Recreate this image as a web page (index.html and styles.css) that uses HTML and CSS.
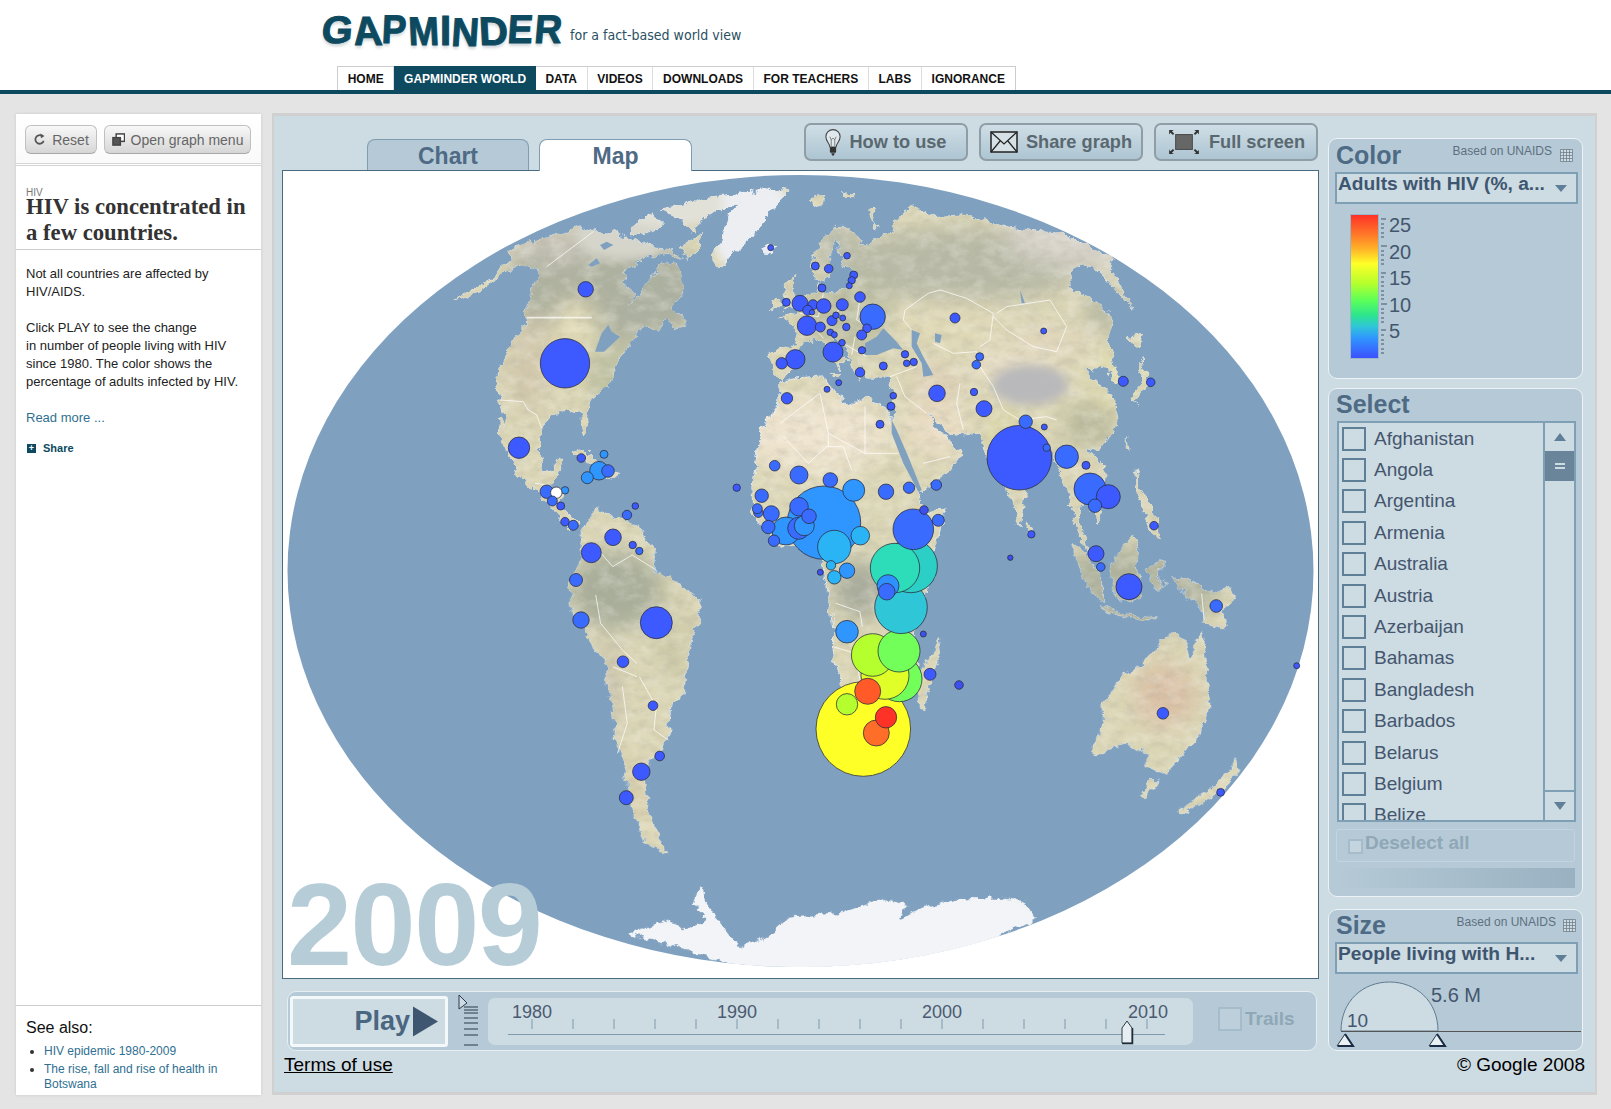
FILE: index.html
```html
<!DOCTYPE html>
<html lang="en">
<head>
<meta charset="utf-8">
<title>Gapminder World</title>
<link rel="stylesheet" href="styles.css">
</head>
<body>
<header class="site-head">
  <div class="brand">
    <div class="logo"><span class="l1">G</span><span class="l2">A</span><span class="l3">P</span><span class="l4">M</span><span class="l5">I</span><span class="l6">N</span><span class="l7">D</span><span class="l8">E</span><span class="l9">R</span></div>
    <div class="tagline">for a fact-based world view</div>
  </div>
  <nav class="nav">
    <a>HOME</a><a class="on">GAPMINDER WORLD</a><a>DATA</a><a>VIDEOS</a><a>DOWNLOADS</a><a>FOR TEACHERS</a><a>LABS</a><a>IGNORANCE</a>
  </nav>
</header>

<div class="page">
  <aside class="side">
    <div class="side-top">
      <button class="gbtn gb-reset"><svg class="gi" viewBox="0 0 14 14"><path d="M11.5 8.5A4.6 4.6 0 1 1 9.8 3.2" fill="none" stroke="#555" stroke-width="1.9"/><path d="M8 0.5l4.4 2.6-3.8 2.6z" fill="#555"/></svg>Reset</button>
      <button class="gbtn gb-open"><svg class="gi" viewBox="0 0 14 14"><rect x="4.5" y="1" width="9" height="8" fill="#fff" stroke="#444" stroke-width="1.6"/><rect x="1" y="5" width="8" height="8" fill="#555" stroke="#444" stroke-width="1.6"/></svg>Open graph menu</button>
    </div>
    <div class="side-head">
      <div class="kicker">HIV</div>
      <h1>HIV is concentrated in a few countries.</h1>
    </div>
    <div class="side-body">
      <p>Not all countries are affected by HIV/AIDS.</p>
      <p>Click PLAY to see the change<br>in number of people living with HIV since 1980. The color shows the percentage of adults infected by HIV.</p>
      <a class="more">Read more ...</a>
      <div class="share"><span class="plus">+</span>Share</div>
    </div>
    <div class="see">
      <h2>See also:</h2>
      <ul>
        <li>HIV epidemic 1980-2009</li>
        <li>The rise, fall and rise of health in Botswana</li>
      </ul>
    </div>
  </aside>

  <main class="app">
    <section class="centre">
      <div class="toolbar">
        <div class="tabs">
          <div class="tab">Chart</div>
          <div class="tab active">Map</div>
        </div>
        <div class="tools">
          <button class="tool"><svg class="ti-bulb" viewBox="0 0 18 32"><path d="M5.5 21c0-4-4.5-6-4.5-11.500a8 8 0 0 1 16 0c0 5.500-4.500 7.500-4.500 11.500z" fill="#dfe8ec" stroke="#444" stroke-width="1.2"/><path d="M7 20V13L5.500 9.500M11 20V13l1.500-3.500M7 13l2-2 2 2" fill="none" stroke="#666" stroke-width=".9"/><rect x="5.500" y="21" width="7" height="6.500" rx="1" fill="#333"/><path d="M7 28h4l-1 2.500H8z" fill="#333"/></svg>How to use</button>
          <button class="tool"><svg class="ti-mail" viewBox="0 0 28 24"><rect x="1" y="2" width="26" height="20" fill="#d5e1e7" stroke="#222" stroke-width="1.500"/><path d="M1 2l13 12L27 2M1 22l9.500-11.500M27 22L17.500 10.500" fill="none" stroke="#222" stroke-width="1.200"/></svg>Share graph</button>
          <button class="tool"><svg class="ti-full" viewBox="0 0 34 28"><rect x="8" y="6" width="18" height="16" fill="#666" stroke="#444"/><path d="M1 1h5l-2 1.500 2.500 2.500-1.500 1.500L2.500 4 1 6zM33 1h-5l2 1.500-2.500 2.500 1.500 1.500L31.500 4 33 6zM1 27h5l-2-1.500 2.500-2.500-1.500-1.500-2.500 2.500L1 22zM33 27h-5l2-1.500-2.500-2.500 1.500-1.500 2.500 2.500 1.500-1.500z" fill="#333"/></svg>Full screen</button>
        </div>
      </div>

      <div class="plot">
        <svg class="map" viewBox="283 171 1035 807" xmlns="http://www.w3.org/2000/svg">
          <defs>
            <filter id="soft" x="-30%" y="-30%" width="160%" height="160%"><feGaussianBlur stdDeviation="11"/></filter>
            <filter id="soft2" x="-30%" y="-30%" width="160%" height="160%"><feGaussianBlur stdDeviation="5"/></filter>
            <filter id="rough" filterUnits="userSpaceOnUse" x="283" y="171" width="1035" height="807"><feTurbulence type="fractalNoise" baseFrequency=".11" numOctaves="4" seed="7" result="n"/><feDisplacementMap in="SourceGraphic" in2="n" scale="10" xChannelSelector="R" yChannelSelector="G"/></filter>
            <filter id="grainDark" filterUnits="userSpaceOnUse" x="283" y="171" width="1035" height="807"><feTurbulence type="fractalNoise" baseFrequency=".08 .12" numOctaves="5" seed="11"/><feColorMatrix type="matrix" values="0 0 0 0 .42  0 0 0 0 .40  0 0 0 0 .33  1.800 0 0 0 -.72"/></filter>
            <filter id="grainLight" filterUnits="userSpaceOnUse" x="283" y="171" width="1035" height="807"><feTurbulence type="fractalNoise" baseFrequency=".06 .09" numOctaves="4" seed="23"/><feColorMatrix type="matrix" values="0 0 0 0 1  0 0 0 0 .98  0 0 0 0 .92  0 1.800 0 0 -.72"/></filter>
            <g id="land">
              <g transform="translate(400 170) scale(.33333)">
                <path d="M290 300L330 275L325 240L385 208L400 222L440 200L540 170L580 185L640 185L690 205L760 230L810 235L848 270L800 250L750 262L700 285L670 310L680 350L705 372L690 412L730 350L770 300L800 270L840 295L852 370L810 420L845 432L850 470L820 472L800 445L770 490L735 465L700 510L660 560L640 610L625 650L570 690L560 740L565 795L550 797L545 730L500 720L455 735L425 770L415 840L430 905L470 895L465 870L490 860L472 920L450 948L490 960L482 1010L532 1060L510 1080L480 1050L440 1000L405 950L385 945L345 905L335 875L300 800L295 740L320 770L300 690L290 640L300 590L340 510L380 470L375 425L400 360L420 300L380 290L340 295L300 320L240 365L160 390L240 345L285 318Z"/>
                <path d="M860 270L840 230L880 210L905 190L900 235Z"/>
                <path d="M690 195L700 165L750 135L790 150L780 175L730 190Z"/>
                <path d="M780 120L830 110L860 98L920 85L960 80L1000 75L1060 60L1030 90L960 120L900 150L880 190L840 140L800 130Z"/>
                <path d="M1165 65L1090 55L1040 75L990 130L965 205L940 260L945 290L965 297L1000 250L1060 200L1100 140L1130 100Z"/>
                <path d="M1085 235L1110 222L1130 232L1115 252L1095 250Z"/>
                <path d="M815 465L850 435L848 470L830 475Z"/>
                <path d="M515 845L550 835L590 875L620 890L570 880L530 860Z"/>
                <path d="M620 900L660 910L620 925Z"/>
              </g>
              <g transform="translate(780 170) scale(.33333)">
                <path d="M95 290L100 262L128 212L160 172L200 172L250 205L240 225L262 222L290 205L340 188L345 150L375 128L400 105L450 140L540 135L620 150L690 172L790 185L850 190L950 240L1000 265L990 295L1015 335L1060 415L1030 385L975 320L945 292L905 285L865 310L880 365L930 385L1000 440L985 520L1010 600L1025 645L1000 640L985 600L960 590L940 605L925 590L925 620L970 650L1000 680L1015 750L990 800L960 840L925 830L935 855L975 900L975 960L955 1060L930 1020L905 985L895 1040L915 1100L925 1160L890 1080L865 950L850 945L830 880L795 810L775 840L740 940L720 1075L680 950L620 860L600 790L550 795L510 790L470 760L445 725L470 790L505 795L515 825L548 845L510 900L425 965L400 960L345 800L335 755L340 680L330 625L260 625L245 590L235 570L245 630L225 610L205 560L180 510L150 495L205 575L180 575L175 605L150 540L120 510L85 515L65 525L35 570L40 590L10 630L-25 600L-30 545L50 525L40 510L50 470L0 440L50 430L60 385L110 372L115 340L128 365L170 370L205 350L230 305L190 290L175 240L170 205L150 250L145 320L125 335L105 320Z"/>
                <path d="M15 340L45 310L40 360L55 400L10 420L20 390Z"/>
                <path d="M-25 395L-5 385L0 410L-25 420Z"/>
                <path d="M270 115L285 110L275 165L300 175L268 150Z"/>
                <path d="M90 85L135 75L125 105L110 110Z"/>
                <path d="M190 72L230 70L225 80L195 80Z"/>
                <path d="M1040 500L1085 490L1075 540L1050 510Z"/>
                <path d="M1085 565L1105 640L1080 680L1060 690L1075 710L1050 680L1085 640Z"/>
                <path d="M1040 800L1048 845L1035 830Z"/>
                <path d="M962 880L975 885L972 905L962 900Z"/>
                <path d="M1065 895L1085 960L1130 1040L1135 1112L1110 1070L1075 980Z"/>
                <path d="M742 1050L756 1075L750 1100L740 1085Z"/>
                <path d="M150 610L180 615L170 625Z"/>
              </g>
              <path d="M780 383L797 378L825 376L828 387L837 393L850 408L860 398L880 402L890 418L895 437L913 477L920 503L930 512L945 508L940 530L933 550L933 573L923 600L913 633L920 673L907 697L887 707L863 722L843 683L833 660L835 607L833 627L827 587L820 557L815 542L780 547L753 513L752 487L758 450L755 457L763 427L780 403Z"/>
              <g transform="translate(540 480) scale(.48473 .33333)">
                <path d="M115 85L150 110L195 130L235 205L235 280L270 295L330 360L330 420L310 490L295 640L270 670L265 760L245 820L205 880L215 900L220 960L235 1040L262 1125L220 1090L195 1010L180 900L160 800L150 700L135 550L100 470L65 380L60 310L85 240L85 155L110 100Z"/>
                <path d="M1097 190L1120 220L1160 290L1160 365L1130 320L1105 240Z"/>
                <path d="M1155 375L1210 405L1275 415L1240 420L1180 400Z"/>
                <path d="M1180 250L1220 165L1235 200L1230 260L1240 340L1220 370L1185 350L1178 290Z"/>
                <path d="M1250 265L1290 240L1275 285L1290 320L1265 325L1258 290Z"/>
                <path d="M1305 290L1345 305L1385 340L1420 325L1435 350L1405 385L1415 450L1370 420L1360 380L1330 340Z"/>
                <path d="M1300 460L1330 480L1340 550L1365 455L1370 510L1382 680L1355 780L1290 880L1250 860L1250 820L1215 785L1170 810L1145 830L1140 815L1160 740L1160 680L1200 590L1240 555L1275 500Z"/>
                <path d="M1260 905L1275 905L1250 955L1240 950Z"/>
                <path d="M1435 830L1440 880L1405 935L1320 1000L1318 990L1385 925L1425 870Z"/>
                <path d="M822 475L826 520L800 620L795 685L780 670L785 590L800 545L815 510Z"/>
                <path d="M185 1360L255 1325L300 1350L345 1320L320 1270L330 1225L355 1300L385 1355L410 1400L470 1370L510 1315L620 1300L710 1258L755 1275L740 1320L800 1280L880 1255L1000 1260L1022 1315L920 1385L800 1450L600 1490L480 1485L380 1445L270 1395Z"/>
              </g>
            </g>
            <mask id="landmask" maskUnits="userSpaceOnUse" x="283" y="171" width="1035" height="807"><use href="#land" class="white-fill" filter="url(#rough)"/></mask>
            <clipPath id="globe"><ellipse cx="800.500" cy="571" rx="513" ry="396"/></clipPath>
          </defs>

          <ellipse class="ocean" cx="800.500" cy="571" rx="513" ry="396"/>
          <g clip-path="url(#globe)">
            <use href="#land" class="coast" filter="url(#rough)"/>
            <g mask="url(#landmask)">
              <rect x="283" y="171" width="1035" height="807" class="base"/>
              <g filter="url(#soft)">
                <ellipse cx="600" cy="285" rx="95" ry="60" fill="#adb19f"/>
                <ellipse cx="555" cy="245" rx="50" ry="18" fill="#c4c1b6"/>
                <ellipse cx="660" cy="295" rx="40" ry="45" fill="#acb1a0"/>
                <ellipse cx="575" cy="345" rx="25" ry="45" fill="#e2dbb6"/>
                <ellipse cx="528" cy="365" rx="22" ry="50" fill="#d2c8ac"/>
                <ellipse cx="612" cy="375" rx="30" ry="35" fill="#c0c2a3"/>
                <ellipse cx="615" cy="590" rx="48" ry="40" fill="#a8ae9a"/>
                <ellipse cx="672" cy="640" rx="18" ry="45" fill="#ccc9a8"/>
                <ellipse cx="608" cy="690" rx="8" ry="50" fill="#bcb4a3"/>
                <ellipse cx="635" cy="790" rx="15" ry="35" fill="#d9cfac"/>
                <ellipse cx="815" cy="435" rx="75" ry="40" fill="#eee3cd"/>
                <ellipse cx="860" cy="590" rx="28" ry="30" fill="#a8ac9b"/>
                <ellipse cx="935" cy="430" rx="32" ry="28" fill="#eaddc3"/>
                <ellipse cx="960" cy="265" rx="125" ry="38" fill="#b8baa6"/>
                <ellipse cx="1095" cy="235" rx="90" ry="35" fill="#d5d1c8"/>
                <ellipse cx="945" cy="322" rx="60" ry="22" fill="#e0d9b6"/>
                <ellipse cx="1000" cy="365" rx="30" ry="20" fill="#e5dbc2"/>
                <ellipse cx="935" cy="385" rx="28" ry="22" fill="#dfd1b7"/>
                <ellipse cx="1050" cy="345" rx="42" ry="16" fill="#e2d7bd"/>
                <ellipse cx="1115" cy="380" rx="22" ry="30" fill="#e2ddb0"/>
                <ellipse cx="1090" cy="425" rx="28" ry="22" fill="#b9ba9b"/>
                <ellipse cx="1010" cy="440" rx="22" ry="28" fill="#d9d5a3"/>
                <ellipse cx="1110" cy="310" rx="28" ry="22" fill="#b9bba4"/>
                <ellipse cx="845" cy="315" rx="45" ry="40" fill="#bdbfa3"/>
                <ellipse cx="835" cy="245" rx="20" ry="30" fill="#b8bbaa"/>
                <ellipse cx="1130" cy="590" rx="90" ry="42" fill="#aeb29c"/>
                <ellipse cx="1165" cy="695" rx="30" ry="32" fill="#dac0a5"/>
              </g>
              <rect x="283" y="171" width="1035" height="807" filter="url(#grainDark)" class="grain"/>
              <rect x="283" y="171" width="1035" height="807" filter="url(#grainLight)" class="grain"/>
              <g filter="url(#soft2)">
                <ellipse cx="1030" cy="385" rx="38" ry="20" fill="#b9b9bb"/>
                <ellipse cx="752" cy="225" rx="42" ry="50" fill="#eceef2"/>
                <ellipse cx="830" cy="930" rx="220" ry="70" fill="#f2f4f7"/>
                <ellipse cx="625" cy="235" rx="50" ry="25" fill="#d6d5cb"/>
                <ellipse cx="670" cy="205" rx="55" ry="22" fill="#e2e1d8"/>
              </g>
            </g>
            <g class="water">
              <g transform="translate(780 170) scale(.33333)">
                <path d="M255 520L290 500L310 475L345 510L370 540L340 535L290 555L255 555Z"/>
                <path d="M395 480L420 490L410 520L430 560L460 615L430 620L425 580L395 530Z"/>
                <path d="M465 490L485 495L480 520L465 515Z"/>
                <path d="M720 360L735 400L725 400Z"/>
                <path d="M335 750L350 780L385 860L425 960L415 965L370 880L335 790Z"/>
              </g>
              <g transform="translate(400 170) scale(.33333)">
                <path d="M585 545L605 490L625 465L635 485L660 500L612 545Z"/>
                <path d="M600 225L620 215L640 225L612 240Z"/>
                <path d="M565 285L590 265L600 280L575 290Z"/>
              </g>
            </g>
            <g class="borders">
              <g transform="translate(400 170) scale(.33333)">
                <path class="strong" d="M380 443H575"/>
                <path d="M440 290L580 185M300 690L370 695L385 720L410 735L425 775M405 940L440 945"/>
              </g>
              <g transform="translate(780 170) scale(.33333)">
                <path d="M375 420L445 370L480 360L560 385L640 430L630 510L600 530M650 430L680 410L810 390L860 470L830 545L760 530L680 480L640 440M375 420L370 450L395 480M460 520L520 550L590 545L600 590L640 650L670 720L720 750L800 740L830 750M540 640L530 700L550 780M330 620L410 590M350 620L375 680L440 730M430 880L510 860M0 760L120 670L145 790L145 830M255 710L255 850L355 850M10 800L85 880L140 830L190 830L215 900M145 790L255 850M240 385L230 450L280 480M180 390L170 450M130 370L115 440L60 430M100 470L130 505M225 500L215 555M260 560L190 520"/>
              </g>
              <g transform="translate(540 480) scale(.48473 .33333)">
                <path d="M120 210L150 260L190 225L240 270M115 345L125 430L170 510L200 550M205 590L240 680L235 750L265 780M150 560L200 590M170 620L180 730L160 820M610 370L660 395L665 440M605 500L650 520L660 600M1365 340L1370 420"/>
              </g>
            </g>
          </g>

          <g class="dots">
            <circle class="b0" cx="863.300" cy="729" r="47.300" style="fill:#ffff28"/>
            <circle cx="899.300" cy="679" r="22.700" style="fill:#72ff5a"/>
            <circle cx="885" cy="675.300" r="24" style="fill:#e0ff28"/>
            <circle cx="872.700" cy="655" r="21.300" style="fill:#b4ff2d"/>
            <circle cx="899" cy="651" r="21" style="fill:#72ff5a"/>
            <circle cx="867.700" cy="691.300" r="13" style="fill:#ff5a28"/>
            <circle cx="847" cy="704.300" r="10.700" style="fill:#b4ff2d"/>
            <circle cx="876.300" cy="733" r="13" style="fill:#ff6e28"/>
            <circle cx="886" cy="717.300" r="10.700" style="fill:#ff3228"/>
            <circle cx="901" cy="607.300" r="26.300" style="fill:#2fc6d8"/>
            <circle cx="910.700" cy="566" r="26.700" style="fill:#2ccfc5"/>
            <circle cx="895" cy="568" r="24.700" style="fill:#2dddba"/>
            <circle cx="888" cy="585.700" r="11" style="fill:#2f90ff"/>
            <circle class="b1" cx="886.700" cy="591.700" r="8.300"/>
            <circle class="b1" cx="913.300" cy="529.300" r="20.300"/>
            <circle class="b3" cx="924" cy="510" r="4.300"/>
            <circle class="b1" cx="938.300" cy="520.300" r="6"/>
            <circle class="b2" cx="824" cy="522.700" r="36.700"/>
            <circle class="b2" cx="786" cy="531" r="14"/>
            <circle class="b4" cx="834.300" cy="547" r="16.700"/>
            <circle class="b2" cx="853.700" cy="490.300" r="11"/>
            <circle class="b4" cx="860.300" cy="535.700" r="9.300"/>
            <circle class="b1" cx="798.700" cy="528.300" r="11"/>
            <circle class="b2" cx="804.300" cy="525.700" r="10"/>
            <circle class="b1" cx="799" cy="506.700" r="9.300"/>
            <circle class="b1" cx="809" cy="516.300" r="7.300"/>
            <circle class="b1" cx="771.300" cy="513.700" r="8"/>
            <circle class="b1" cx="768.300" cy="527" r="6.700"/>
            <circle class="b1" cx="774" cy="540.700" r="5.700"/>
            <circle class="b1" cx="761.700" cy="495.700" r="6.700"/>
            <circle class="b1" cx="758.300" cy="512.700" r="4.700"/>
            <circle class="b1" cx="757.300" cy="508.700" r="5"/>
            <circle class="b0" cx="736.700" cy="487.700" r="3.700"/>
            <circle class="b1" cx="774.700" cy="465.700" r="5.300"/>
            <circle class="b1" cx="799" cy="475" r="9"/>
            <circle class="b1" cx="830.300" cy="480" r="7.300"/>
            <circle class="b1" cx="886" cy="491.700" r="7.700"/>
            <circle class="b1" cx="909" cy="487.700" r="5.700"/>
            <circle class="b1" cx="936.300" cy="485" r="5.300"/>
            <circle class="b4" cx="831" cy="565.300" r="4.700"/>
            <circle class="b2" cx="847" cy="570.700" r="7.700"/>
            <circle class="b4" cx="834.300" cy="577.300" r="6.700"/>
            <circle class="b3" cx="820.300" cy="572.300" r="3"/>
            <circle class="b2" cx="847" cy="631.700" r="11.300"/>
            <circle class="b3" cx="923.300" cy="634" r="3"/>
            <circle class="b0" cx="930" cy="674.300" r="6"/>
            <circle class="b3" cx="959" cy="685" r="4.300"/>

            <circle class="b0" cx="585.700" cy="289.300" r="7.700"/>
            <circle class="b0" cx="565" cy="363.300" r="24.700"/>
            <circle class="b0" cx="519" cy="447.700" r="10.700"/>
            <circle class="b0" cx="581.300" cy="458" r="4.300"/>
            <circle class="b2" cx="604" cy="454.300" r="4"/>
            <circle class="b2" cx="599" cy="470.700" r="9.300"/>
            <circle class="b1" cx="608" cy="471" r="6.300"/>
            <circle class="b2" cx="587.300" cy="477.700" r="6"/>
            <circle class="b1" cx="546.700" cy="491.700" r="6.700"/>
            <circle class="b2" cx="565" cy="490.300" r="3.700"/>
            <circle cx="556.300" cy="492.700" r="5.700" style="fill:#fff"/>
            <circle class="b1" cx="552.300" cy="501" r="5"/>
            <circle class="b0" cx="560.700" cy="506" r="4"/>
            <circle class="b0" cx="565" cy="521.700" r="4.300"/>
            <circle class="b1" cx="573.300" cy="525.300" r="5"/>
            <circle class="b0" cx="635.300" cy="506" r="3.300"/>
            <circle class="b1" cx="627" cy="515" r="4.700"/>
            <circle class="b0" cx="613" cy="537.300" r="8.300"/>
            <circle class="b0" cx="591.300" cy="552.700" r="10"/>
            <circle class="b0" cx="632.700" cy="545" r="3.700"/>
            <circle class="b1" cx="639.300" cy="551" r="3.700"/>
            <circle class="b1" cx="576" cy="580" r="6.500"/>
            <circle class="b1" cx="581" cy="620" r="8.200"/>
            <circle class="b0" cx="656.300" cy="622.700" r="16"/>
            <circle class="b0" cx="623" cy="661.700" r="5.800"/>
            <circle class="b0" cx="653" cy="705.700" r="4.800"/>
            <circle class="b0" cx="659.700" cy="756" r="4.800"/>
            <circle class="b0" cx="641.300" cy="771.700" r="8.700"/>
            <circle class="b0" cx="626.300" cy="797.700" r="7"/>

            <circle class="b0" cx="1162.900" cy="713.300" r="5.800"/>
            <circle class="b1" cx="1216.200" cy="606" r="6.300"/>
            <circle class="b0" cx="1220.600" cy="792.300" r="3.900"/>
            <circle class="b0" cx="1296.700" cy="665.700" r="3"/>
            <circle class="b0" cx="1129" cy="586.700" r="13"/>
            <circle class="b0" cx="1096" cy="553.700" r="8"/>
            <circle class="b1" cx="1100.800" cy="567" r="4.300"/>
            <circle class="b0" cx="1154" cy="525.700" r="4.300"/>
            <circle class="b0" cx="1031.300" cy="534.300" r="3.700"/>
            <circle class="b3" cx="1010.300" cy="557.700" r="2.700"/>

            <circle class="b0" cx="1019.300" cy="457.700" r="32.300"/>
            <circle class="b1" cx="1046.700" cy="447.700" r="3.700"/>
            <circle class="b1" cx="1066.700" cy="456.700" r="11.700"/>
            <circle class="b0" cx="1086" cy="465.300" r="4"/>
            <circle class="b1" cx="1090" cy="489" r="16"/>
            <circle class="b0" cx="1108.300" cy="496.700" r="12"/>
            <circle class="b1" cx="1095" cy="505.700" r="6.700"/>

            <circle class="b0" cx="770.700" cy="247.700" r="3"/>
            <circle class="b0" cx="786.300" cy="302.300" r="4"/>
            <circle class="b0" cx="800" cy="303.300" r="8"/>
            <circle class="b0" cx="828.700" cy="268.700" r="4.300"/>
            <circle class="b0" cx="815.300" cy="266" r="4"/>
            <circle class="b0" cx="847" cy="255.700" r="3.300"/>
            <circle class="b0" cx="853.700" cy="275" r="4"/>
            <circle class="b0" cx="851.700" cy="280.300" r="3.700"/>
            <circle class="b0" cx="849.300" cy="285.700" r="3"/>
            <circle class="b0" cx="822" cy="288" r="4"/>
            <circle class="b0" cx="860" cy="297" r="5.300"/>
            <circle class="b0" cx="842.300" cy="304.700" r="6"/>
            <circle class="b0" cx="813" cy="304.700" r="5"/>
            <circle class="b0" cx="823.700" cy="306" r="7.300"/>
            <circle class="b1" cx="872.700" cy="316.700" r="12.700"/>
            <circle class="b0" cx="807.700" cy="310.300" r="5"/>
            <circle class="b0" cx="812" cy="312.300" r="2.700"/>
            <circle class="b0" cx="807" cy="325.700" r="9.700"/>
            <circle class="b0" cx="820.300" cy="327" r="5"/>
            <circle class="b0" cx="832" cy="320.700" r="5"/>
            <circle class="b0" cx="836" cy="315.300" r="3.300"/>
            <circle class="b0" cx="842.700" cy="318" r="3"/>
            <circle class="b0" cx="846.300" cy="327" r="3.700"/>
            <circle class="b0" cx="830.300" cy="332.300" r="3.300"/>
            <circle class="b0" cx="834.300" cy="334.700" r="3"/>
            <circle class="b0" cx="867" cy="328.300" r="4.300"/>
            <circle class="b0" cx="861.700" cy="335" r="5"/>
            <circle class="b0" cx="842" cy="342.700" r="3.300"/>
            <circle class="b0" cx="862" cy="350.300" r="3.700"/>
            <circle class="b0" cx="833" cy="352" r="10"/>
            <circle class="b0" cx="795.300" cy="359.300" r="9.700"/>
            <circle class="b0" cx="781.700" cy="363.300" r="5.700"/>
            <circle class="b0" cx="860" cy="372.300" r="4.700"/>
            <circle class="b0" cx="883.300" cy="366" r="4"/>
            <circle class="b0" cx="905" cy="354.300" r="3.700"/>
            <circle class="b0" cx="913.700" cy="362" r="3.700"/>
            <circle class="b0" cx="906.700" cy="363.300" r="3.300"/>
            <circle class="b0" cx="955" cy="318" r="5"/>
            <circle class="b0" cx="1043.700" cy="331" r="3"/>
            <circle class="b1" cx="979.700" cy="356.700" r="4"/>
            <circle class="b1" cx="976.300" cy="364.700" r="4.300"/>
            <circle class="b0" cx="937" cy="393.300" r="8.300"/>
            <circle class="b0" cx="974" cy="392" r="3.700"/>
            <circle class="b0" cx="984" cy="408.700" r="8"/>
            <circle class="b1" cx="1025.700" cy="421.700" r="6.700"/>
            <circle class="b0" cx="1044.300" cy="427" r="3"/>
            <circle class="b0" cx="838.700" cy="382.700" r="3"/>
            <circle class="b0" cx="827" cy="389.300" r="3"/>
            <circle class="b0" cx="787" cy="398.300" r="5.700"/>
            <circle class="b0" cx="893.300" cy="395.700" r="3.300"/>
            <circle class="b0" cx="891" cy="406.300" r="4"/>
            <circle class="b0" cx="880" cy="424.300" r="4"/>
            <circle class="b0" cx="1123.300" cy="381.300" r="5"/>
            <circle class="b0" cx="1150.700" cy="382.300" r="4.300"/>
          </g>
        </svg>
        <div class="year">2009</div>
      </div>

      <div class="timeline">
        <button class="play">Play<svg class="play-tri" viewBox="0 0 26 31"><path d="M0 0L26 15.500L0 31z"/></svg></button>
        <svg class="speed" viewBox="0 0 22 54"><path class="spd-mark" d="M1 1L9 9L1 15z"/><path class="spd-ticks" d="M6 13H20M6 16H20M6 19H20M6 24H20M6 29H20M6 35H20M6 41H20M6 51H20"/></svg>
        <div class="slider">
          <svg class="slide-svg" viewBox="488 997 705 47">
            <text x="532" y="1017">1980</text><text x="737" y="1017">1990</text><text x="942" y="1017">2000</text><text x="1148" y="1017">2010</text>
            <path class="sl-ticks" d="M532 1018v10M573 1018v10M614 1018v10M655 1018v10M696 1018v10M737 1018v10M778 1018v10M819 1018v10M860 1018v10M901 1018v10M942 1018v10M983 1018v10M1024 1018v10M1065 1018v10M1106 1018v10M1147 1018v10"/>
            <path class="sl-line" d="M508 1033.500H1165"/>
            <path class="sl-thumb" d="M1122 1042V1027L1127 1020L1132 1027V1042z"/>
            <path class="sl-thumb-shade" d="M1122 1042.500H1132.500V1027"/>
          </svg>
        </div>
        <div class="trails"><span class="tr-box"></span>Trails</div>
      </div>
      <a class="terms">Terms of use</a>
    </section>

    <section class="right">
      <div class="panel p-color">
        <div class="p-head"><h3>Color</h3><span class="src">Based on UNAIDS</span><svg class="grid-i" viewBox="0 0 13 13"><path d="M.5.500h12v12H.500zM.500 3.500h12M.500 6.500h12M.500 9.500h12M3.500.500v12M6.500.500v12M9.500.500v12"/></svg></div>
        <div class="drop"><span>Adults with HIV (%, a...</span><i class="caret"></i></div>
        <div class="legend">
          <div class="ramp"></div>
          <div class="scale">
            <svg class="scale-ticks" viewBox="0 0 8 143"><path d="M0 4h5M0 9h3M0 13h3M0 18h3M0 22h3M0 31h6M0 36h3M0 40h3M0 45h3M0 49h3M0 58h5M0 62h3M0 67h3M0 71h3M0 76h3M0 89h6M0 84h3M0 80h3M0 94h3M0 98h3M0 103h3M0 107h3M0 115h5M0 120h3M0 125h3M0 129h3M0 134h3M0 138h3"/></svg>
            <div class="scale-nums"><span>25</span><span>20</span><span>15</span><span>10</span><span>5</span></div>
          </div>
        </div>
      </div>

      <div class="panel p-select">
        <div class="p-head"><h3>Select</h3></div>
        <div class="list">
          <div class="rows">
            <div class="row"><i></i>Afghanistan</div>
            <div class="row"><i></i>Angola</div>
            <div class="row"><i></i>Argentina</div>
            <div class="row"><i></i>Armenia</div>
            <div class="row"><i></i>Australia</div>
            <div class="row"><i></i>Austria</div>
            <div class="row"><i></i>Azerbaijan</div>
            <div class="row"><i></i>Bahamas</div>
            <div class="row"><i></i>Bangladesh</div>
            <div class="row"><i></i>Barbados</div>
            <div class="row"><i></i>Belarus</div>
            <div class="row"><i></i>Belgium</div>
            <div class="row"><i></i>Belize</div>
          </div>
          <div class="scroll">
            <div class="sc-btn sc-up"><i></i></div>
            <div class="sc-thumb"></div>
            <div class="sc-track"></div>
            <div class="sc-btn sc-down"><i></i></div>
          </div>
        </div>
        <div class="deselect"><span></span>Deselect all</div>
        <div class="fadebar"></div>
      </div>

      <div class="panel p-size">
        <div class="p-head"><h3>Size</h3><span class="src">Based on UNAIDS</span><svg class="grid-i" viewBox="0 0 13 13"><path d="M.5.500h12v12H.500zM.500 3.500h12M.500 6.500h12M.500 9.500h12M3.500.500v12M6.500.500v12M9.500.500v12"/></svg></div>
        <div class="drop"><span>People living with H...</span><i class="caret"></i></div>
        <div class="sizer">
          <svg class="sizer-svg" viewBox="1330 976 252 74">
            <path class="arch" d="M1340 1030C1340 1000 1362 981 1388.500 981C1415 981 1437 1000 1437 1030z"/>
            <text x="1346" y="1026" class="s10">10</text>
            <text x="1430" y="1001" class="s56">5.6 M</text>
            <path class="axis" d="M1340 1030.500H1580"/>
            <path class="knob" d="M1344 1033L1336 1045H1352z"/><path class="knob-d" d="M1344 1033L1352 1045H1337"/>
            <path class="knob" d="M1436 1033L1428 1045H1444z"/><path class="knob-d" d="M1436 1033L1444 1045H1429"/>
          </svg>
        </div>
      </div>
      <div class="copy">© Google 2008</div>
    </section>
  </main>
</div>
</body>
</html>
```

FILE: styles.css
```css
* { box-sizing: border-box; }
html, body { margin: 0; padding: 0; }
body { width: 1611px; height: 1109px; overflow: hidden; background: #e4e4e4; font-family: "Liberation Sans", Arial, sans-serif; color: #222; }

.site-head { height: 94px; background: #fff; border-bottom: 4px solid #0d4a5f; position: relative; display: flex; flex-direction: column; justify-content: flex-end; }
.brand { position: absolute; left: 322px; top: 9px; display: flex; align-items: flex-end; }
.logo { font-weight: 700; font-size: 40px; line-height: 42px; color: #0d4a5f; display: flex; text-shadow: 0 3px 3px rgba(120,140,150,.35); letter-spacing: -.5px; -webkit-text-stroke: 1px #0d4a5f; }
.logo span { display: block; }
.l1 { transform: skewX(-6deg) scaleY(.96); }
.l2 { transform: translateY(1px) skewX(5deg) scaleY(1.02); }
.l3 { transform: translateY(-1px) scaleX(.92) skewX(-3deg); }
.l4 { transform: translateY(1px) scaleX(.92) skewX(3deg); }
.l5 { transform: scaleY(1.06); }
.l6 { transform: translateY(2px) scaleX(.95) skewX(-4deg); }
.l7 { transform: translateY(1px) skewX(3deg); }
.l8 { transform: translateY(-1px) skewX(-4deg) scaleX(.95); }
.l9 { transform: translateY(-1px) skewX(-5deg) scaleX(.95); }
.tagline { font-family: "DejaVu Sans", sans-serif; font-stretch: condensed; font-size: 14px; color: #2a5062; margin: 0 0 7px 8px; line-height: 18px; white-space: nowrap; }

.nav { display: flex; margin-left: 337px; height: 24px; border-left: 1px solid #ccc; align-self: flex-start; background: #fff; border-top: 1px solid #ccc; border-right: 1px solid #ccc; }
.nav a { padding: 0 9.700px; font-size: 12px; font-weight: 700; line-height: 25px; color: #111; border-right: 1px solid #ddd; white-space: nowrap; }
.nav a:last-child { border-right: 0; }
.nav a.on { background: #0d4a5f; color: #fff; margin-top: -1px; line-height: 26px; border-right: 0; }

.page { display: flex; padding: 20px 14px 0 16px; gap: 11px; align-items: flex-start; }

.side { width: 245px; height: 981px; background: #fff; box-shadow: 0 0 3px rgba(0,0,0,.12); display: flex; flex-direction: column; }
.side-top { height: 52px; padding: 11px 0 0 9px; display: flex; gap: 7px; border-bottom: 3px double #d4d4d4; background: linear-gradient(#fff, #fafafa); }
.gbtn { height: 29px; padding: 0; border: 1px solid #c0c0c0; border-bottom-color: #a8a8a8; border-radius: 6px; background: linear-gradient(#f8f8f8, #d6d6d6); font: 14px "Liberation Sans", Arial, sans-serif; color: #666; display: flex; align-items: center; justify-content: center; gap: 6px; }
.gb-reset { width: 72px; }
.gb-open { width: 147px; }
.gi { width: 13px; height: 13px; }
.side-head { padding: 22px 10px 4px; height: 84px; border-bottom: 1px solid #ccc; }
.kicker { font-size: 10px; line-height: 10px; color: #777; }
.side-head h1 { margin: -4px 0 0; font: 700 22.700px/25.700px "Liberation Serif", serif; color: #333; }
.side-body { padding: 15px 10px 0; font-size: 13px; line-height: 18px; color: #222; flex: 1; }
.side-body p { margin: 0 0 18px; }
.more { display: block; color: #2f7090; margin-top: 18px; }
.share { margin-top: 12px; font-size: 11px; font-weight: 700; color: #0d4a5f; display: flex; align-items: center; line-height: 18px; }
.plus { width: 9px; height: 9px; background: #0d4a5f; color: #fff; font-size: 9px; line-height: 9px; text-align: center; margin: 0 7px 0 1px; }
.see { height: 90px; border-top: 1px solid #ccc; padding: 12px 10px 0; }
.see h2 { margin: 0; font-size: 16px; line-height: 20px; font-weight: 400; color: #111; }
.see ul { margin: 6px 0 0; padding: 0 0 0 18px; font-size: 12px; line-height: 15px; color: #2f6f92; }
.see li { margin-bottom: 3px; }
.see li::marker { color: #333; }

.app { width: 1325px; height: 982px; margin-top: -1px; background: #cddbe3; border: 2px solid #d0d0d0; border-top-width: 3px; border-bottom-width: 3px; padding: 0 12px 0 8px; display: flex; gap: 9px; }
.centre { width: 1037px; display: flex; flex-direction: column; }
.toolbar { height: 54px; display: flex; justify-content: space-between; align-items: flex-end; }
.tabs { display: flex; gap: 10px; margin-left: 85px; }
.tab { width: 162px; height: 31px; background: #b5cad6; border: 1px solid #7f9db2; border-bottom: 0; border-radius: 8px 8px 0 0; text-align: center; font-size: 23px; font-weight: 700; line-height: 33px; color: #4e6a85; }
.tab.active { width: 153px; height: 32px; background: #fff; margin-bottom: -1px; position: relative; z-index: 2; }
.tools { align-self: flex-start; margin: 7px 1px 0 0; display: flex; gap: 11px; }
.tool { width: 164px; height: 38px; padding: 0; border: 2px solid #8f9ea6; border-radius: 7px; background: linear-gradient(#cfdee6, #adc5d2); font: 700 18.200px "Liberation Sans", Arial, sans-serif; color: #5a6870; display: flex; align-items: center; justify-content: center; gap: 8px; }
.ti-bulb { width: 16px; height: 31px; }
.ti-mail { width: 28px; height: 24px; }
.ti-full { width: 34px; height: 26px; }

.plot { position: relative; height: 809px; background: #fff; border: 1px solid #4a6a80; }
.map { display: block; width: 1035px; height: 807px; }
.year { position: absolute; left: 4px; bottom: 1px; font-size: 117px; font-weight: 700; line-height: 104px; color: #b6cdd8; letter-spacing: -1.500px; }
.ocean { fill: #7fa0bf; }
.white-fill { fill: #fff; }
.coast { fill: #fff; stroke: #fff; stroke-width: 1.500; stroke-opacity: .7; }
.coast path { vector-effect: non-scaling-stroke; }
.base { fill: #dbd6b5; }
.grain { opacity: .32; }
.water { fill: #7fa0bf; }
.borders { fill: none; stroke: #fff; stroke-opacity: .72; stroke-width: 1; }
.borders path { vector-effect: non-scaling-stroke; }
.borders .strong { stroke-width: 1.600; }
.dots circle { stroke: #2b2b3a; stroke-width: .9; stroke-opacity: .85; }
.b0 { fill: #3c5aff; }
.b1 { fill: #3a6bff; }
.b2 { fill: #2f96ff; }
.b3 { fill: #3c50f0; }
.b4 { fill: #2bb4f5; }

.timeline { margin: 12px 2px 0 5px; height: 60px; background: #b5cad6; border: 1px solid #e6eef2; border-radius: 9px; display: flex; align-items: center; padding-left: 2px; }
.play { width: 158px; height: 51px; padding: 0 7px 0 0; background: #cddbe3; border: 3px solid #f4f8fa; border-radius: 3px; font: 700 27px "Liberation Sans", Arial, sans-serif; color: #4a6680; display: flex; align-items: center; justify-content: flex-end; gap: 3px; }
.play-tri { width: 25px; height: 31px; fill: #3f5670; }
.speed { width: 22px; height: 54px; margin-left: 10px; }
.spd-mark { fill: #cddbe3; stroke: #2b3a48; stroke-width: 1; }
.spd-ticks { stroke: #2b3a48; stroke-width: 1; }
.slider { width: 705px; height: 47px; margin-left: 8px; background: #cddbe3; border-radius: 7px; }
.slide-svg { display: block; width: 705px; height: 47px; }
.slide-svg text { font-size: 18px; fill: #4a5a70; text-anchor: middle; }
.sl-ticks { stroke: #7f9bb0; stroke-width: 1; }
.sl-line { stroke: #7f9bb0; stroke-width: 1.200; }
.sl-thumb { fill: #e6eef2; stroke: #2b3a48; stroke-width: 1; }
.sl-thumb-shade { fill: none; stroke: #1f2d3a; stroke-width: 1.500; }
.trails { margin: -4px 0 0 25px; display: flex; align-items: center; gap: 3px; font-size: 19px; font-weight: 700; color: #8fa7b6; }
.tr-box { width: 24px; height: 24px; border: 2px solid #a5bcca; background: #bccfda; }
.terms { margin: 3px 0 0 2px; font-size: 19px; line-height: 22px; color: #000; text-decoration: underline; }

.right { width: 255px; padding-top: 22px; display: flex; flex-direction: column; }
.panel { background: #b5cad6; border: 1px solid #ecf2f5; border-radius: 9px; padding: 0 6px; }
.p-color { height: 241px; margin-bottom: 9px; }
.p-select { height: 509px; margin-bottom: 12px; }
.p-size { height: 142px; }
.p-head { height: 33px; display: flex; align-items: flex-start; padding-left: 1px; position: relative; }
.p-select .p-head, .p-size .p-head { height: 32px; }
.p-head h3 { margin: 1px 0 0; font-size: 25px; line-height: 30px; font-weight: 700; color: #4e6a85; }
.p-select h3, .p-size h3 { margin-top: 0; }
.src { position: absolute; right: 24px; top: 4px; font-size: 12px; line-height: 16px; color: #5f6f7f; }
.p-size .src { right: 20px; }
.grid-i { position: absolute; right: 3px; top: 10px; width: 13px; height: 13px; fill: #cddbe3; stroke: #66757f; stroke-width: .7; }
.p-size .grid-i { right: 0; top: 9px; }
.drop { height: 32px; margin-right: -2px; background: #cddbe3; border: 2px solid #7f9fb5; display: flex; padding: 0 9px 0 1px; justify-content: space-between; font-size: 19.200px; font-weight: 700; line-height: 20px; color: #3f5670; }
.caret { margin-top: 11px; width: 0; height: 0; border: 6px solid transparent; border-top: 7px solid #5f7f98; border-bottom: 0; }
.legend { display: flex; margin: 10px 0 0 15px; }
.ramp { width: 29px; height: 145px; border: 1px solid #9ab6c8; background: linear-gradient(#ff3228 0%, #ff7a28 14%, #ffb428 24%, #ffff28 34%, #b4ff2d 48%, #5aff5a 60%, #2de58c 70%, #2fc6d8 78%, #2f96ff 86%, #3c50ff 100%); }
.scale { display: flex; margin-left: 2px; }
.scale-ticks { width: 8px; height: 145px; stroke: #44566e; stroke-width: 1; }
.scale-nums { display: flex; flex-direction: column; margin: -2px 0 0 0; font-size: 20px; line-height: 26.500px; color: #44566e; }

.list { margin: 0 0 0 2px; height: 401px; background: #cddbe3; border: 2px solid #7f9fb5; display: flex; overflow: hidden; }
.rows { flex: 1; overflow: hidden; padding-left: 3px; }
.row { height: 31.400px; display: flex; align-items: center; gap: 8px; font-size: 19px; color: #44566e; white-space: nowrap; }
.row i { width: 24px; height: 24px; border: 2px solid #5f7f98; flex: none; }
.scroll { width: 31px; border-left: 2px solid #7f9fb5; display: flex; flex-direction: column; }
.sc-btn { height: 30px; display: flex; align-items: center; justify-content: center; flex: none; }
.sc-up { height: 28px; }
.sc-up i { border: 6px solid transparent; border-bottom: 8px solid #5f7f98; border-top: 0; }
.sc-down { border-top: 2px solid #7f9fb5; }
.sc-down i { border: 6px solid transparent; border-top: 8px solid #5f7f98; border-bottom: 0; }
.sc-thumb { height: 30px; background: #6a8599 linear-gradient(#cddbe3, #cddbe3) center / 10px 6px no-repeat; position: relative; }
.sc-thumb::after { content: ""; position: absolute; left: 9px; right: 9px; top: 14px; height: 2px; background: #6a8599; }
.sc-track { flex: 1; }
.deselect { margin: 7px 1px 0 1px; height: 33px; border: 1px solid #c3d4de; border-radius: 3px; display: flex; align-items: flex-start; font-size: 19px; font-weight: 700; line-height: 26px; color: #8fa7b6; padding-left: 11px; }
.deselect span { width: 15px; height: 15px; margin: 9px 2px 0 0; border: 2px solid #a5bcca; background: #c4d5df; flex: none; }
.fadebar { margin: 6px 1px 0 1px; height: 20px; background: linear-gradient(90deg, #b5cad6, #99b1c1); }
.sizer { margin: 3px -5px 0 -5px; }
.sizer-svg { display: block; width: 252px; height: 74px; margin-left: 1px; }
.arch { fill: #cddbe3; stroke: #5f7a90; stroke-width: 1; }
.axis { stroke: #555; stroke-width: 1; }
.s10 { font-size: 19px; fill: #44566e; }
.s56 { font-size: 20px; fill: #44566e; }
.knob { fill: #e8f0f4; stroke: #2b3a48; stroke-width: 1; }
.knob-d { fill: none; stroke: #1a2a44; stroke-width: 2; }
.copy { margin-top: 2px; text-align: right; margin-right: -2px; font-size: 19px; line-height: 24px; color: #000; }
```
